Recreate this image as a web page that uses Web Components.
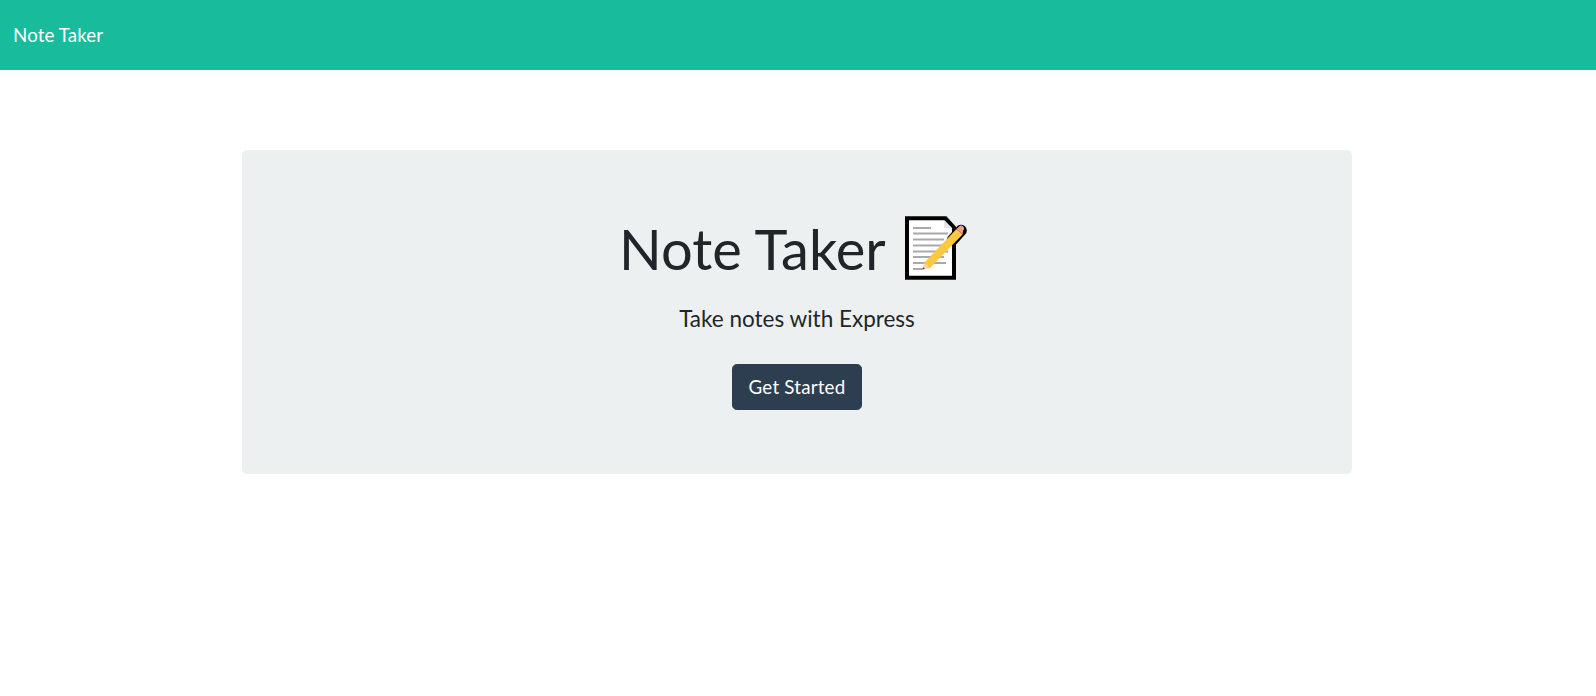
<!DOCTYPE html>
<html lang="en">
<head>
<meta charset="utf-8">
<title>Note Taker</title>
<style>
  html, body { margin: 0; background: #fff; }
  body { font-family: Lato, "Liberation Sans", sans-serif; font-size: 15px; line-height: 1.5; color: #212529; }
</style>
</head>
<body>
<note-navbar>Note Taker</note-navbar>
<note-container>
  <note-jumbotron>
    <span slot="title">Note Taker</span>
    <span slot="lead">Take notes with Express</span>
    <note-button slot="action">Get Started</note-button>
  </note-jumbotron>
</note-container>
<script>
class NoteNavbar extends HTMLElement {
  constructor() {
    super();
    this.attachShadow({ mode: 'open' });
    this.shadowRoot.innerHTML = `
      <style>
        :host {
          display: flex;
          align-items: center;
          height: 70px;
          padding: 0 13px;
          background: #18bc9c;
          color: #fff;
          font-size: 18.75px;
          letter-spacing: 0.1px;
        }
      </style>
      <slot></slot>
    `;
  }
}

class NoteContainer extends HTMLElement {
  constructor() {
    super();
    this.attachShadow({ mode: 'open' });
    this.shadowRoot.innerHTML = `
      <style>
        :host {
          display: block;
          width: 1110px;
          margin: 80px 0 0 242px;
        }
      </style>
      <slot></slot>
    `;
  }
}

class NoteJumbotron extends HTMLElement {
  constructor() {
    super();
    this.attachShadow({ mode: 'open' });
    this.shadowRoot.innerHTML = `
      <style>
        :host {
          display: block;
          padding: 65px 32px 64px;
          background: #ecf0f1;
          border-radius: 5px;
          text-align: center;
        }
        h1 {
          margin: 0 0 20px;
          font-size: 56px;
          font-weight: 400;
          line-height: 1.2;
        }
        note-memo-icon { margin: 0 6px; }
        p {
          margin: 0 0 13px;
          font-size: 22.5px;
          font-weight: 400;
          line-height: 1.5;
        }
        .action { padding-top: 15px; }
      </style>
      <h1><slot name="title"></slot> <note-memo-icon></note-memo-icon></h1>
      <p><slot name="lead"></slot></p>
      <div class="action"><slot name="action"></slot></div>
    `;
  }
}

class NoteMemoIcon extends HTMLElement {
  constructor() {
    super();
    this.attachShadow({ mode: 'open' });
    this.shadowRoot.innerHTML = `
      <style>
        :host { display: inline-block; width: 64px; height: 64px; vertical-align: -10px; }
        svg { display: block; width: 64px; height: 64px; }
      </style>
      <svg viewBox="0 0 64 64" aria-hidden="true">
        <path d="M2 2.3H40.5L49 11.5V61.7H2Z" fill="#fff" stroke="#000" stroke-width="4"/>
        <path d="M39 5V12H47Z" fill="#e3e6e8"/>
        <g fill="#a9a9a9">
          <rect x="8" y="11" width="18" height="2"/>
          <rect x="8" y="16.5" width="35" height="2"/>
          <rect x="8" y="22.5" width="31" height="2"/>
          <rect x="8" y="28.5" width="33" height="2"/>
          <rect x="8" y="34.5" width="35" height="2"/>
          <rect x="8" y="40" width="31" height="2"/>
          <rect x="8" y="46" width="33" height="2"/>
          <rect x="8" y="52" width="10" height="2"/>
        </g>
        <path d="M47.5 24L56 14.5" fill="none" stroke="#000" stroke-width="11.5" stroke-linecap="round"/>
        <path d="M19 47L51.5 13L57.5 18.5L24.5 52.5Z" fill="#fdc83e"/>
        <path d="M19 47L24.5 52.5L17.5 53.5Z" fill="#f5d3b5"/>
        <path d="M17.5 53.5L20 53.1L18 51Z" fill="#555"/>
        <path d="M51.5 13L54 10.4C55.2 9.2 57 9.2 58.2 10.4C59.4 11.6 59.4 13.4 58.2 14.6L57.5 18.5Z" fill="#ee9c8c"/>
      </svg>
    `;
  }
}

class NoteButton extends HTMLElement {
  constructor() {
    super();
    this.attachShadow({ mode: 'open' });
    this.shadowRoot.innerHTML = `
      <style>
        :host {
          display: inline-block;
          padding: 8px 16px;
          background: #2c3e50;
          border: 1px solid #2c3e50;
          border-radius: 4.8px;
          color: #fff;
          font-size: 18.75px;
          letter-spacing: 0.2px;
          line-height: 1.5;
          cursor: pointer;
        }
      </style>
      <slot></slot>
    `;
  }
}

customElements.define('note-navbar', NoteNavbar);
customElements.define('note-container', NoteContainer);
customElements.define('note-jumbotron', NoteJumbotron);
customElements.define('note-memo-icon', NoteMemoIcon);
customElements.define('note-button', NoteButton);
</script>
</body>
</html>
